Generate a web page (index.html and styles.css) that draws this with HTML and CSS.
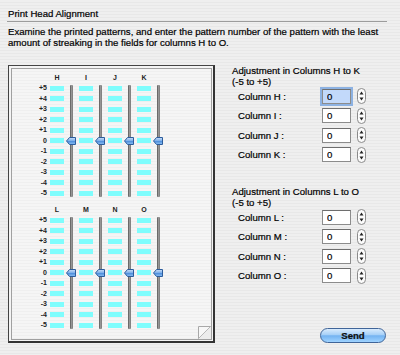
FILE: index.html
```html
<!DOCTYPE html>
<html lang="en">

<head>
    <meta charset="UTF-8">
    <title>Print Head Alignment</title>
    <link rel="stylesheet" href="styles.css">
</head>

<body>
    <div class="window">
        <div class="title">Print Head Alignment</div>
        <div class="divider"></div>
        <p class="intro">Examine the printed patterns, and enter the pattern number of the pattern with the least amount of streaking in the fields for columns H to O.</p>

        <div class="main">
            <div class="sheet">
                <div class="sheet-inner">
                    <div class="group">
                        <div class="labels">
                            <span class="head"></span>
                            <span>+5</span><span>+4</span><span>+3</span><span>+2</span><span>+1</span><span>0</span>
                            <span>-1</span><span>-2</span><span>-3</span><span>-4</span><span>-5</span>
                        </div>
                        <div class="col">
                            <div class="head">H</div>
                            <div class="lane"><div class="bars"></div><div class="track"><svg class="thumb" width="10" height="8" viewBox="0 0 10 8"><polygon points="0.5,4 3.5,0.5 9.5,0.5 9.5,7.5 3.5,7.5" fill="url(#tg)" stroke="#2c5c9c"/></svg></div></div>
                        </div>
                        <div class="col">
                            <div class="head">I</div>
                            <div class="lane"><div class="bars"></div><div class="track"><svg class="thumb" width="10" height="8" viewBox="0 0 10 8"><polygon points="0.5,4 3.5,0.5 9.5,0.5 9.5,7.5 3.5,7.5" fill="url(#tg)" stroke="#2c5c9c"/></svg></div></div>
                        </div>
                        <div class="col">
                            <div class="head">J</div>
                            <div class="lane"><div class="bars"></div><div class="track"><svg class="thumb" width="10" height="8" viewBox="0 0 10 8"><polygon points="0.5,4 3.5,0.5 9.5,0.5 9.5,7.5 3.5,7.5" fill="url(#tg)" stroke="#2c5c9c"/></svg></div></div>
                        </div>
                        <div class="col">
                            <div class="head">K</div>
                            <div class="lane"><div class="bars"></div><div class="track"><svg class="thumb" width="10" height="8" viewBox="0 0 10 8"><polygon points="0.5,4 3.5,0.5 9.5,0.5 9.5,7.5 3.5,7.5" fill="url(#tg)" stroke="#2c5c9c"/></svg></div></div>
                        </div>
                    </div>

                    <div class="group group-2">
                        <div class="labels">
                            <span class="head"></span>
                            <span>+5</span><span>+4</span><span>+3</span><span>+2</span><span>+1</span><span>0</span>
                            <span>-1</span><span>-2</span><span>-3</span><span>-4</span><span>-5</span>
                        </div>
                        <div class="col">
                            <div class="head">L</div>
                            <div class="lane"><div class="bars"></div><div class="track"><svg class="thumb" width="10" height="8" viewBox="0 0 10 8"><polygon points="0.5,4 3.5,0.5 9.5,0.5 9.5,7.5 3.5,7.5" fill="url(#tg)" stroke="#2c5c9c"/></svg></div></div>
                        </div>
                        <div class="col">
                            <div class="head">M</div>
                            <div class="lane"><div class="bars"></div><div class="track"><svg class="thumb" width="10" height="8" viewBox="0 0 10 8"><polygon points="0.5,4 3.5,0.5 9.5,0.5 9.5,7.5 3.5,7.5" fill="url(#tg)" stroke="#2c5c9c"/></svg></div></div>
                        </div>
                        <div class="col">
                            <div class="head">N</div>
                            <div class="lane"><div class="bars"></div><div class="track"><svg class="thumb" width="10" height="8" viewBox="0 0 10 8"><polygon points="0.5,4 3.5,0.5 9.5,0.5 9.5,7.5 3.5,7.5" fill="url(#tg)" stroke="#2c5c9c"/></svg></div></div>
                        </div>
                        <div class="col">
                            <div class="head">O</div>
                            <div class="lane"><div class="bars"></div><div class="track"><svg class="thumb" width="10" height="8" viewBox="0 0 10 8"><polygon points="0.5,4 3.5,0.5 9.5,0.5 9.5,7.5 3.5,7.5" fill="url(#tg)" stroke="#2c5c9c"/></svg></div></div>
                        </div>
                    </div>

                    <!-- folded page corner -->
                    <svg class="curl" width="13" height="13" viewBox="0 0 13 13">
                        <polygon points="0,13 13,0 13,13" fill="#ececec"/>
                        <polygon points="0.5,12.5 0.5,0.5 12.5,0.5" fill="#f7f7f7" stroke="#a8a8a8"/>
                        <line x1="0.5" y1="12.5" x2="12.5" y2="0.5" stroke="#b8b8b8"/>
                    </svg>
                </div>
            </div>

            <div class="form">
                <h3>Adjustment in Columns H to K<br>(-5 to +5)</h3>
                <div class="fields">
                    <div class="field"><label>Column H :</label><input class="num focus" type="text" value="0"><svg class="stepper" width="9" height="16" viewBox="0 0 9 16"><rect x="0.5" y="0.5" width="8" height="15" rx="4" fill="#fbfbfb" stroke="#8a8a8a"/><path d="M2.5 6.5 L4.5 3.5 L6.5 6.5Z M2.5 9.5 L4.5 12.5 L6.5 9.5Z" fill="#222"/></svg></div>
                    <div class="field"><label>Column I :</label><input class="num" type="text" value="0"><svg class="stepper" width="9" height="16" viewBox="0 0 9 16"><rect x="0.5" y="0.5" width="8" height="15" rx="4" fill="#fbfbfb" stroke="#8a8a8a"/><path d="M2.5 6.5 L4.5 3.5 L6.5 6.5Z M2.5 9.5 L4.5 12.5 L6.5 9.5Z" fill="#222"/></svg></div>
                    <div class="field"><label>Column J :</label><input class="num" type="text" value="0"><svg class="stepper" width="9" height="16" viewBox="0 0 9 16"><rect x="0.5" y="0.5" width="8" height="15" rx="4" fill="#fbfbfb" stroke="#8a8a8a"/><path d="M2.5 6.5 L4.5 3.5 L6.5 6.5Z M2.5 9.5 L4.5 12.5 L6.5 9.5Z" fill="#222"/></svg></div>
                    <div class="field"><label>Column K :</label><input class="num" type="text" value="0"><svg class="stepper" width="9" height="16" viewBox="0 0 9 16"><rect x="0.5" y="0.5" width="8" height="15" rx="4" fill="#fbfbfb" stroke="#8a8a8a"/><path d="M2.5 6.5 L4.5 3.5 L6.5 6.5Z M2.5 9.5 L4.5 12.5 L6.5 9.5Z" fill="#222"/></svg></div>
                </div>

                <h3 class="second">Adjustment in Columns L to O<br>(-5 to +5)</h3>
                <div class="fields">
                    <div class="field"><label>Column L :</label><input class="num" type="text" value="0"><svg class="stepper" width="9" height="16" viewBox="0 0 9 16"><rect x="0.5" y="0.5" width="8" height="15" rx="4" fill="#fbfbfb" stroke="#8a8a8a"/><path d="M2.5 6.5 L4.5 3.5 L6.5 6.5Z M2.5 9.5 L4.5 12.5 L6.5 9.5Z" fill="#222"/></svg></div>
                    <div class="field"><label>Column M :</label><input class="num" type="text" value="0"><svg class="stepper" width="9" height="16" viewBox="0 0 9 16"><rect x="0.5" y="0.5" width="8" height="15" rx="4" fill="#fbfbfb" stroke="#8a8a8a"/><path d="M2.5 6.5 L4.5 3.5 L6.5 6.5Z M2.5 9.5 L4.5 12.5 L6.5 9.5Z" fill="#222"/></svg></div>
                    <div class="field"><label>Column N :</label><input class="num" type="text" value="0"><svg class="stepper" width="9" height="16" viewBox="0 0 9 16"><rect x="0.5" y="0.5" width="8" height="15" rx="4" fill="#fbfbfb" stroke="#8a8a8a"/><path d="M2.5 6.5 L4.5 3.5 L6.5 6.5Z M2.5 9.5 L4.5 12.5 L6.5 9.5Z" fill="#222"/></svg></div>
                    <div class="field"><label>Column O :</label><input class="num" type="text" value="0"><svg class="stepper" width="9" height="16" viewBox="0 0 9 16"><rect x="0.5" y="0.5" width="8" height="15" rx="4" fill="#fbfbfb" stroke="#8a8a8a"/><path d="M2.5 6.5 L4.5 3.5 L6.5 6.5Z M2.5 9.5 L4.5 12.5 L6.5 9.5Z" fill="#222"/></svg></div>
                </div>

                <button class="send" type="button">Send</button>
            </div>
        </div>
    </div>

    <!-- shared gradient for the slider thumbs -->
    <svg width="0" height="0" class="defs">
        <defs>
            <linearGradient id="tg" x1="0" y1="0" x2="0" y2="1">
                <stop offset="0" stop-color="#cfe2fa"/>
                <stop offset="0.45" stop-color="#7fb0ea"/>
                <stop offset="0.55" stop-color="#4f8fdc"/>
                <stop offset="1" stop-color="#8fc2f4"/>
            </linearGradient>
        </defs>
    </svg>
</body>

</html>
```

FILE: styles.css
```css
* {
    margin: 0;
    padding: 0;
    box-sizing: border-box;
}

body {
    width: 400px;
    height: 355px;
    overflow: hidden;
    font-family: "Liberation Sans", Arial, sans-serif;
    font-size: 9.6px;
    color: #000;
    -webkit-text-stroke: 0.2px #000;
    background: repeating-linear-gradient(to bottom, #efefef 0, #efefef 2px, #e8e8e8 2px, #e8e8e8 3px);
}

.window {
    padding: 0 8px;
}

.title {
    padding-top: 7.5px;
    line-height: 11px;
}

.divider {
    margin: 2.5px 5px 0 -1px;
    border-top: 1px solid #9c9c9c;
}

.intro {
    margin-top: 3.5px;
    line-height: 11px;
}

.main {
    display: flex;
    gap: 17px;
    margin-top: 17.5px;
    height: 278px;
}

/* pattern sheet */
.sheet {
    width: 207px;
    height: 278px;
    border: 1px solid #444;
    border-right: 2px solid #333;
    border-bottom: 2px solid #333;
    padding: 2px 1px 1px 2px;
    background: #f4f4f4;
}

.sheet-inner {
    position: relative;
    height: 100%;
    border: 1px solid #a0a0a0;
    padding-top: 4px;
    background: repeating-linear-gradient(to bottom, #f5f5f5 0, #f5f5f5 2px, #efefef 2px, #efefef 3px);
}

.group {
    display: flex;
}

.group-2 {
    margin-top: 6.5px;
}

.labels {
    width: 38px;
    padding-right: 3px;
    display: flex;
    flex-direction: column;
    align-items: flex-end;
    font-size: 7px;
    font-weight: bold;
    color: #222;
    -webkit-text-stroke: 0;
}

.labels span {
    height: 10.5px;
    line-height: 10.5px;
}

.labels .head {
    height: 10px;
}

.col {
    width: 29px;
}

.col .head {
    width: 14px;
    height: 10px;
    line-height: 10px;
    text-align: center;
    font-size: 7px;
    font-weight: bold;
    color: #222;
    -webkit-text-stroke: 0;
}

.lane {
    display: flex;
    height: 115.5px;
}

.bars {
    width: 14px;
    background: repeating-linear-gradient(to bottom,
            transparent 0, transparent 2.75px,
            #7ffdfd 2.75px, #7ffdfd 7.75px,
            transparent 7.75px, transparent 10.5px);
}

.track {
    position: relative;
    width: 3px;
    margin: 2px 6px 1.5px;
    border-radius: 1px;
    background: linear-gradient(to right, #555, #9c9c9c 55%, #747474);
}

.thumb {
    position: absolute;
    left: -4px;
    top: 51.75px;
    display: block;
}

.curl {
    position: absolute;
    right: 0;
    bottom: 0;
    display: block;
}

.defs {
    position: absolute;
}

/* adjustment form */
.form {
    width: 154px;
    display: flex;
    flex-direction: column;
}

.form h3 {
    font-size: 9.6px;
    font-weight: normal;
    line-height: 11.5px;
    margin-top: -0.5px;
}

.form h3.second {
    margin-top: 21px;
}

.fields {
    margin-top: -1px;
}

.field {
    display: flex;
    align-items: center;
    height: 19.5px;
}

.field label {
    width: 90px;
    padding-left: 6px;
}

.num {
    width: 29px;
    height: 15px;
    border: 1px solid #8c8c8c;
    border-top-color: #6e6e6e;
    background: #fff;
    font-family: inherit;
    font-size: 9.6px;
    padding-left: 4px;
    outline: none;
}

.num.focus {
    background: #c2d9fa;
    box-shadow: 0 0 0 2px #8db2e2;
}

.stepper {
    display: block;
    margin-left: 6px;
}

.send {
    margin-top: auto;
    align-self: flex-end;
    width: 66px;
    height: 15px;
    border: 1px solid #3f6498;
    border-radius: 8px;
    background: linear-gradient(to bottom, #d9ebfd 0, #a6d0f7 45%, #74b3f1 52%, #9fd3ff 100%);
    font-family: inherit;
    font-size: 9.6px;
    font-weight: bold;
    color: #111;
    line-height: 13px;
}
```
